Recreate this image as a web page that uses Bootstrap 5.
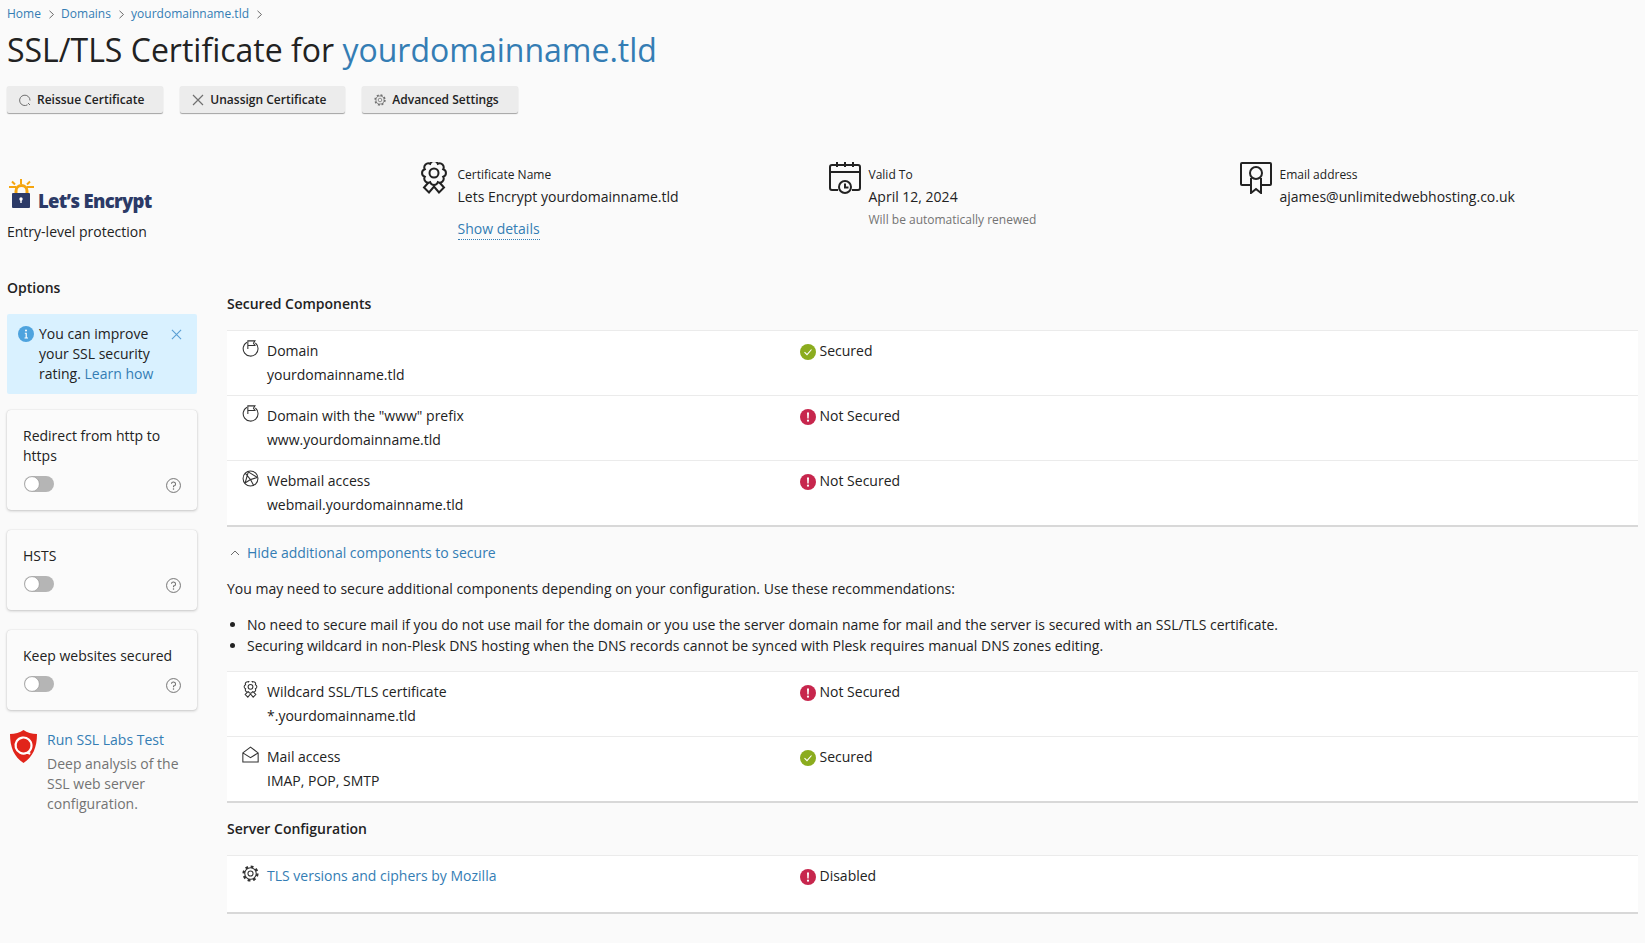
<!doctype html>
<html lang="en">
<head>
<meta charset="utf-8">
<title>SSL/TLS Certificate</title>
<link href="https://cdn.jsdelivr.net/npm/bootstrap@5.3.0/dist/css/bootstrap.min.css" rel="stylesheet">
<style>
html,body{height:100%}
body{background:#fafafa;color:#222;font:14px/20px "Open Sans","Liberation Sans",sans-serif;padding:0 7px;overflow:hidden}
a{color:#347db4;text-decoration:none}
.crumbs{font-size:12px;line-height:20px;padding-top:4px;margin:0;gap:6.6px;--bs-breadcrumb-margin-bottom:0}
.crumbs svg{width:7px;height:9px;color:#6b6b6b;display:block}
.page-title{font-size:32px;line-height:44px;font-weight:400;margin:4px 0 14px}
.act-btn{--bs-btn-font-size:12px;--bs-btn-font-weight:600;--bs-btn-line-height:16px;--bs-btn-padding-x:0;--bs-btn-padding-y:5px;--bs-btn-bg:#ececec;--bs-btn-color:#222;--bs-btn-hover-bg:#e4e4e4;--bs-btn-hover-color:#222;--bs-btn-border-width:0;--bs-btn-border-radius:2px;height:27px;padding-left:12px;padding-right:19px;box-shadow:0 1px 1px rgba(0,0,0,.35);display:flex;align-items:center;gap:6px}
.act-btn svg{width:12px;height:12px;color:#707070}
.btn-stack{gap:17px}
.sum-grid{display:grid;grid-template-columns:410.5px 411px 411px 1fr;margin-top:50px;height:111px}
.le-logo{margin-top:16px;height:32px;gap:3px}
.le-word{font-size:18.5px;line-height:22px;font-weight:800;color:#2c3a67;letter-spacing:-.7px;margin-top:11px}
.le-sub{margin-top:11px}
.sum-item{gap:8px}
.sum-icon{width:32px;height:32px;flex:none;margin-top:-1px}
.sum-lbl{font-size:12px;line-height:16px;margin-top:4px}
.sum-val{margin-top:4px}
.sum-note{font-size:12px;line-height:16px;color:#737373;margin-top:5px}
.dot-link{border-bottom:1px dotted #347db4;padding-bottom:1px;display:inline-block;margin-top:12px;line-height:19px}
.cols{gap:30px}
.side-col{width:190px;flex:none;margin-top:4px}
.side-h{font-weight:600;margin:0 0 16px;font-size:14px;line-height:20px}
.tip-box{background:#d9f1ff;border-radius:2px;padding:10px 9px 10px 11px;gap:5px;margin-bottom:16px}
.tip-box svg.i1{width:16px;height:16px;flex:none;margin-top:2px}
.tip-box svg.i2{width:11px;height:11px;flex:none;margin:5px 6px 0 0;color:#5a9fd4}
.opt-card{--bs-card-bg:#fbfbfb;--bs-card-border-width:0;--bs-card-border-radius:4px;padding:16px 16px 18px;box-shadow:0 0 1px rgba(0,0,0,.18),0 1px 3px rgba(0,0,0,.2);margin-bottom:20px}
.opt-foot{margin-top:10px;height:16px}
.opt-foot .form-check{padding:0 0 0 1px;margin:0;min-height:0;height:16px}
.opt-foot .form-check-input{width:30px;height:16px;margin:0;float:none;display:block;background-color:#b5b5b5;border:0;background-position:left center;background-image:url("data:image/svg+xml,%3Csvg xmlns='http://www.w3.org/2000/svg' viewBox='0 0 16 16'%3E%3Ccircle cx='8' cy='8' r='7.4' fill='%23fff' stroke='%23999' stroke-width='.8'/%3E%3C/svg%3E")}
.opt-foot svg{width:15px;height:15px;color:#6b6b6b;margin:2px 0 -3px}
.lab-box{gap:10px;padding-left:3px}
.lab-box svg{width:27px;height:33px;flex:none}
.lab-txt{color:#737373;margin-top:4px}
.main-col{flex:1;min-width:0}
.sec-h{font-size:14px;font-weight:600;line-height:20px;margin:0 0 16px}
.first-h{margin-top:20px}
.comp-list{--bs-list-group-bg:#fff;--bs-list-group-border-color:#ebebeb;--bs-list-group-item-padding-x:0;--bs-list-group-item-padding-y:0;--bs-list-group-border-radius:0;--bs-list-group-color:#222;border-top:1px solid #ebebeb;border-bottom:2px solid #d8d8d8}
.comp-row{height:65px;padding:10px 0 0 15px!important;border-width:0 0 1px!important}
.comp-row:last-child{border-bottom:0!important;height:64px}
.comp-name{width:557.5px;flex:none;gap:8px}
.comp-name svg{width:17px;height:17px;flex:none;color:#333;margin-top:-1px}
.comp-sub{margin-top:4px}
.comp-stat{gap:4px}
.comp-stat svg{width:16px;height:16px;flex:none;margin-top:3px}
.more-link{margin:16px 0 16px;gap:7px;padding-left:3px}
.more-link svg{width:10px;height:10px;color:#6b6b6b}
.rec-txt{margin:0 0 15px;line-height:20px}
.rec-list{margin:0 0 15px;padding-left:20px;line-height:21px}
.second-h{margin-top:16px}
.tall-row{height:56px!important;padding-top:10px!important}
</style>
</head>
<body>
<svg width="0" height="0" class="position-absolute">
  <defs>
    <symbol id="chev" viewBox="0 0 7 9"><path d="M1.500 .8 5.500 4.500 1.500 8.200" fill="none" stroke="currentColor"/></symbol>
    <symbol id="flag" viewBox="0 0 16 16"><g fill="none" stroke="currentColor" stroke-width="1"><path d="M4.600 2.100A7 7 0 1 0 12.600 2.800"/><path d="M5.500 8.500V.8h6.700L10.800 3l1.400 2.200H5.500"/></g></symbol>
    <symbol id="globe" viewBox="0 0 16 16"><g fill="none" stroke="currentColor"><circle cx="8" cy="8" r="7"/><path d="M3 3l5 6 6.500-2M8 9l-5.500 3.500M8 9l3 5.500M6 1.500 3 12M5.500 1.500 14.500 7"/></g></symbol>
    <symbol id="rosette" viewBox="0 0 24 32"><g fill="none" stroke="currentColor" stroke-width="2"><path d="M21.200 7.200A4 4 0 0 1 21.200 14.800 4 4 0 0 1 15.800 20.200 4 4 0 0 1 8.200 20.200 4 4 0 0 1 2.800 14.800 4 4 0 0 1 2.800 7.200 4 4 0 0 1 8.200 1.800 4 4 0 0 1 15.800 1.800 4 4 0 0 1 21.200 7.200Z"/><circle cx="12" cy="11" r="4.500"/><path d="M6.500 20.500 2 25.500l5 5 5-6 5 6 5-5-4.500-5"/></g></symbol>
    <symbol id="mailo" viewBox="0 0 16 16"><path d="M.8 6.500 8 1l7.200 5.500V15H.8ZM.8 6.500 8 11l7.200-4.500" fill="none" stroke="currentColor"/></symbol>
    <symbol id="gear" viewBox="0 0 16 16"><g fill="none" stroke="currentColor"><circle cx="8" cy="8" r="5.400"/><circle cx="8" cy="8" r="2.400"/><circle cx="8" cy="8" r="6.500" stroke-width="2.200" stroke-dasharray="2.600 2.500"/></g></symbol>
    <symbol id="okc" viewBox="0 0 16 16"><circle cx="8" cy="8" r="8" fill="#8bac1e"/><path d="M4.500 8.200 7 10.700 11.500 5.500" fill="none" stroke="#fff" stroke-width="1.100"/></symbol>
    <symbol id="bad" viewBox="0 0 16 16"><circle cx="8" cy="8" r="8" fill="#c7264d"/><path d="M7 3.500h2l-.3 6H7.300Z" fill="#fff"/><circle cx="8" cy="11.700" r="1.100" fill="#fff"/></symbol>
    <symbol id="help" viewBox="0 0 16 16"><circle cx="8" cy="8" r="7.400" fill="none" stroke="currentColor"/><path d="M5.800 6.200A2.200 2.200 0 1 1 8 8.600v1.200" fill="none" stroke="currentColor" stroke-width="1.100"/><circle cx="8" cy="11.800" r=".8" fill="currentColor"/></symbol>
    <symbol id="xmark" viewBox="0 0 12 12"><path d="M1 1l10 10M11 1 1 11" fill="none" stroke="currentColor" stroke-width="1.200"/></symbol>
  </defs>
</svg>

<ol class="breadcrumb crumbs d-flex align-items-center">
  <li><a href="#">Home</a></li><li><svg><use href="#chev"/></svg></li>
  <li><a href="#">Domains</a></li><li><svg><use href="#chev"/></svg></li>
  <li><a href="#">yourdomainname.tld</a></li><li><svg><use href="#chev"/></svg></li>
</ol>

<h1 class="page-title">SSL/TLS Certificate for <a href="#">yourdomainname.tld</a></h1>

<div class="d-flex btn-stack">
  <button class="btn act-btn" type="button"><svg viewBox="0 0 12 12"><path d="M8.500 10.800A5.200 5.200 0 1 1 11 6.500M9 9l2 2" fill="none" stroke="currentColor"/></svg>Reissue Certificate</button>
  <button class="btn act-btn" type="button"><svg><use href="#xmark"/></svg>Unassign Certificate</button>
  <button class="btn act-btn" type="button"><svg><use href="#gear"/></svg>Advanced Settings</button>
</div>

<div class="sum-grid">
  <div>
    <div class="d-flex le-logo">
      <svg width="28" height="32" viewBox="0 0 28 32">
        <path d="M2 8h7M20 8h7M14 0v5M5 2.500 8 5.500M23 2.500 20 5.500" stroke="#f5a50f" stroke-width="2" fill="none"/>
        <path d="M9 16V12a5.500 5.500 0 0 1 11 0v4" stroke="#f5a50f" stroke-width="3" fill="none"/>
        <rect x="5" y="14" width="18" height="15" rx="1" fill="#2c3a67"/>
        <circle cx="14" cy="20" r="1.700" fill="#fff"/><rect x="13.300" y="20" width="1.400" height="4" fill="#fff"/>
      </svg>
      <div class="le-word">Let’s Encrypt</div>
    </div>
    <div class="le-sub">Entry-level protection</div>
  </div>
  <div class="d-flex sum-item">
    <svg class="sum-icon"><use href="#rosette"/></svg>
    <div>
      <div class="sum-lbl">Certificate Name</div>
      <div class="sum-val">Lets Encrypt yourdomainname.tld</div>
      <a class="dot-link" href="#">Show details</a>
    </div>
  </div>
  <div class="d-flex sum-item">
    <svg class="sum-icon" viewBox="0 0 32 32"><g fill="none" stroke="#222" stroke-width="2"><path d="M9 28H3a2 2 0 0 1-2-2V5a2 2 0 0 1 2-2h26a2 2 0 0 1 2 2v21a2 2 0 0 1-2 2h-6M1 10h30M8 0v5M16 0v5M24 0v5"/><circle cx="16" cy="25" r="6"/><path d="M16 21.500V25.500h3.500"/></g></svg>
    <div>
      <div class="sum-lbl">Valid To</div>
      <div class="sum-val">April 12, 2024</div>
      <div class="sum-note">Will be automatically renewed</div>
    </div>
  </div>
  <div class="d-flex sum-item">
    <svg class="sum-icon" viewBox="0 0 32 32"><g fill="none" stroke="#222" stroke-width="2"><path d="M11 23H2a1 1 0 0 1-1-1V2a1 1 0 0 1 1-1h28a1 1 0 0 1 1 1v20a1 1 0 0 1-1 1h-9"/><circle cx="16" cy="11" r="6"/><path d="M11 16v15l5-4 5 4V16"/></g></svg>
    <div>
      <div class="sum-lbl">Email address</div>
      <div class="sum-val">ajames@unlimitedwebhosting.co.uk</div>
    </div>
  </div>
</div>

<div class="d-flex cols">
  <aside class="side-col">
    <h2 class="side-h">Options</h2>
    <div class="d-flex tip-box">
      <svg class="i1" viewBox="0 0 16 16"><circle cx="8" cy="8" r="8" fill="#4ea3de"/><circle cx="8" cy="4.500" r="1" fill="#fff"/><path d="M6.800 6.800H8.800V11.500H10V12.500H6.500V11.500H7.600V7.800H6.800Z" fill="#fff"/></svg>
      <div class="flex-grow-1">You can improve your SSL security rating. <a href="#">Learn how</a></div>
      <svg class="i2"><use href="#xmark"/></svg>
    </div>
    <div class="card opt-card">
      <div>Redirect from http to https</div>
      <div class="d-flex justify-content-between opt-foot">
        <div class="form-check form-switch"><input class="form-check-input" type="checkbox" role="switch" aria-label="Redirect"></div>
        <svg><use href="#help"/></svg>
      </div>
    </div>
    <div class="card opt-card">
      <div>HSTS</div>
      <div class="d-flex justify-content-between opt-foot">
        <div class="form-check form-switch"><input class="form-check-input" type="checkbox" role="switch" aria-label="HSTS"></div>
        <svg><use href="#help"/></svg>
      </div>
    </div>
    <div class="card opt-card">
      <div>Keep websites secured</div>
      <div class="d-flex justify-content-between opt-foot">
        <div class="form-check form-switch"><input class="form-check-input" type="checkbox" role="switch" aria-label="Keep"></div>
        <svg><use href="#help"/></svg>
      </div>
    </div>
    <div class="d-flex lab-box">
      <svg viewBox="0 0 27 33"><path d="M13.500 0C10 2.500 5 4 0 4c0 13 4 23 13.500 29C23 27 27 17 27 4c-5 0-10-1.500-13.500-4Z" fill="#e1251b"/><path d="M16.800 22.800A8 8 0 1 1 21.500 15.500c0 3-1.700 5.600-4.200 7.200l3 1" fill="none" stroke="#fff" stroke-width="2.200"/></svg>
      <div>
        <a href="#">Run SSL Labs Test</a>
        <div class="lab-txt">Deep analysis of the SSL web server configuration.</div>
      </div>
    </div>
  </aside>

  <main class="main-col">
    <h2 class="sec-h first-h">Secured Components</h2>
    <div class="list-group list-group-flush comp-list">
      <div class="list-group-item d-flex comp-row">
        <div class="d-flex comp-name"><svg><use href="#flag"/></svg><div>Domain<div class="comp-sub">yourdomainname.tld</div></div></div>
        <div class="d-flex comp-stat"><svg><use href="#okc"/></svg>Secured</div>
      </div>
      <div class="list-group-item d-flex comp-row">
        <div class="d-flex comp-name"><svg><use href="#flag"/></svg><div>Domain with the "www" prefix<div class="comp-sub">www.yourdomainname.tld</div></div></div>
        <div class="d-flex comp-stat"><svg><use href="#bad"/></svg>Not Secured</div>
      </div>
      <div class="list-group-item d-flex comp-row">
        <div class="d-flex comp-name"><svg><use href="#globe"/></svg><div>Webmail access<div class="comp-sub">webmail.yourdomainname.tld</div></div></div>
        <div class="d-flex comp-stat"><svg><use href="#bad"/></svg>Not Secured</div>
      </div>
    </div>

    <a href="#" class="d-flex align-items-center more-link"><svg viewBox="0 0 10 10"><path d="M1 7 5 3l4 4" fill="none" stroke="currentColor"/></svg>Hide additional components to secure</a>
    <p class="rec-txt">You may need to secure additional components depending on your configuration. Use these recommendations:</p>
    <ul class="rec-list">
      <li>No need to secure mail if you do not use mail for the domain or you use the server domain name for mail and the server is secured with an SSL/TLS certificate.</li>
      <li>Securing wildcard in non-Plesk DNS hosting when the DNS records cannot be synced with Plesk requires manual DNS zones editing.</li>
    </ul>

    <div class="list-group list-group-flush comp-list">
      <div class="list-group-item d-flex comp-row">
        <div class="d-flex comp-name"><svg><use href="#rosette"/></svg><div>Wildcard SSL/TLS certificate<div class="comp-sub">*.yourdomainname.tld</div></div></div>
        <div class="d-flex comp-stat"><svg><use href="#bad"/></svg>Not Secured</div>
      </div>
      <div class="list-group-item d-flex comp-row">
        <div class="d-flex comp-name"><svg><use href="#mailo"/></svg><div>Mail access<div class="comp-sub">IMAP, POP, SMTP</div></div></div>
        <div class="d-flex comp-stat"><svg><use href="#okc"/></svg>Secured</div>
      </div>
    </div>

    <h2 class="sec-h second-h">Server Configuration</h2>
    <div class="list-group list-group-flush comp-list">
      <div class="list-group-item d-flex comp-row tall-row">
        <div class="d-flex comp-name"><svg><use href="#gear"/></svg><a href="#">TLS versions and ciphers by Mozilla</a></div>
        <div class="d-flex comp-stat"><svg><use href="#bad"/></svg>Disabled</div>
      </div>
    </div>
  </main>
</div>
<script src="https://cdn.jsdelivr.net/npm/bootstrap@5.3.0/dist/js/bootstrap.bundle.min.js"></script>
</body>
</html>
